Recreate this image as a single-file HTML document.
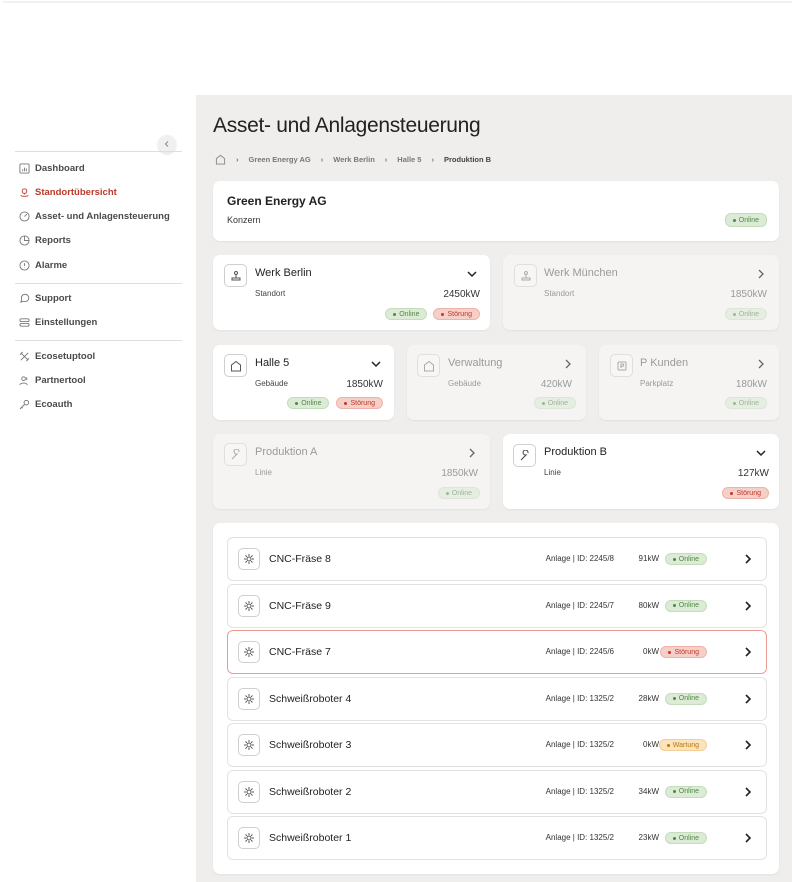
<!DOCTYPE html>
<html><head><meta charset="utf-8"><style>
*{box-sizing:border-box;margin:0;padding:0}
body{width:792px;height:882px;position:relative;background:#fff;font-family:"Liberation Sans",sans-serif;color:#222;overflow:hidden}
.a{position:absolute}
.topline{left:3px;top:1px;width:789px;height:2px;background:#f1f1f1}
.main{left:196px;top:95px;width:596px;height:787px;background:#efeeec}
.nav{left:19px;font-size:9.5px;font-weight:bold;color:#4a4a4a;display:flex;align-items:center;gap:5px}
.nav svg{width:11px;height:11px}
.div{left:15px;width:167px;height:1px;background:#dedede}
.card{background:#fff;border-radius:7px;box-shadow:0 1px 2px rgba(0,0,0,.06)}
.fade{background:#f5f4f3}
.ib{width:23px;height:23px;border:1px solid #cfcfcf;border-radius:5px;background:#fff;display:flex;align-items:center;justify-content:center}
.fade .ib{background:#f7f6f5;border-color:#e0dfdd}
.ib svg{width:12px;height:12px}
.t{font-size:11px;color:#222}
.fade .t,.fade .s,.fade .kw{color:#9a9a9a}
.s{font-size:8px;color:#444}
.kw{font-size:10px;color:#333}
.bd{font-size:7px;height:12px;border-radius:6px;padding:0 7px;display:inline-flex;align-items:center;gap:3px;white-space:nowrap}
.bd:before{content:"";width:3px;height:3px;border-radius:50%;background:currentColor}
.on{background:#dcebd6;color:#4f8a45;border:1px solid #c4dcbb}
.st{background:#f5cfc8;color:#c0392b;border:1px solid #eeb3a8}
.wa{background:#fbe3bd;color:#b9770e;border:1px solid #f3cf93}
.fade .on{background:#e6ede2;color:#9fb598;border-color:#dbe6d5}
.chev{width:12px;height:12px}
.row{left:227px;width:540px;height:44px;border:1px solid #e3e2e0;border-radius:6px;background:#fff}
.row .ib{position:absolute;left:10px;top:10px;width:22px;height:22px}
.row .nm{position:absolute;left:41px;top:15px;font-size:10.5px;color:#222}
.row .mt{position:absolute;right:152px;top:16px;font-size:8px;color:#333}
.row .k{position:absolute;right:107px;top:16px;font-size:8px;color:#333}
.row .bd{position:absolute;right:59px;top:15px}
.row .cv{position:absolute;right:12px;top:15px}
</style></head><body>
<div class="a topline"></div>

<div class="a" style="left:158px;top:135px;width:18px;height:18px;border-radius:50%;background:#f0f0f0;box-shadow:0 1px 2px rgba(0,0,0,.15);display:flex;align-items:center;justify-content:center"><svg width="8" height="8" viewBox="0 0 8 8" fill="none" stroke="#888"><path d="M5 1.5L2.5 4 5 6.5"/></svg></div>
<div class="a div" style="top:151px"></div>
<div class="a nav" style="top:163px"><svg viewBox="0 0 12 12" fill="none" stroke="#777"><rect x="1" y="1" width="10" height="10" rx="1"/><path d="M4 9V7M6 9V5M8 9V6"/></svg>Dashboard</div>
<div class="a nav" style="top:187px;color:#b83a2c"><svg viewBox="0 0 12 12" fill="none" stroke="#b83a2c"><circle cx="6" cy="4.5" r="2.5"/><path d="M6 7v1M2 9c0 1.5 8 1.5 8 0"/></svg>Standortübersicht</div>
<div class="a nav" style="top:211px"><svg viewBox="0 0 12 12" fill="none" stroke="#777"><circle cx="6" cy="6" r="5"/><path d="M6 6l2.5-2.5"/></svg>Asset- und Anlagensteuerung</div>
<div class="a nav" style="top:235px"><svg viewBox="0 0 12 12" fill="none" stroke="#777"><circle cx="6" cy="6" r="5"/><path d="M6 1v5h5"/></svg>Reports</div>
<div class="a nav" style="top:260px"><svg viewBox="0 0 12 12" fill="none" stroke="#777"><circle cx="6" cy="6" r="5"/><path d="M6 3.5v3M6 8v.5"/></svg>Alarme</div>
<div class="a div" style="top:283px"></div>
<div class="a nav" style="top:293px"><svg viewBox="0 0 12 12" fill="none" stroke="#777"><path d="M2 10l1-3a4 4 0 1 1 2 2z"/></svg>Support</div>
<div class="a nav" style="top:317px"><svg viewBox="0 0 12 12" fill="none" stroke="#777"><rect x="1" y="2" width="10" height="3" rx="1.5"/><rect x="1" y="7" width="10" height="3" rx="1.5"/></svg>Einstellungen</div>
<div class="a div" style="top:340px"></div>
<div class="a nav" style="top:351px"><svg viewBox="0 0 12 12" fill="none" stroke="#777"><path d="M2 2l8 8M10 2L2 10M1 4l3-3M8 11l3-3"/></svg>Ecosetuptool</div>
<div class="a nav" style="top:375px"><svg viewBox="0 0 12 12" fill="none" stroke="#777"><circle cx="5" cy="4" r="2"/><path d="M1 11c0-3 8-3 8 0M8 2.5a2 2 0 0 1 0 3"/></svg>Partnertool</div>
<div class="a nav" style="top:399px"><svg viewBox="0 0 12 12" fill="none" stroke="#777"><circle cx="8" cy="4" r="2.5"/><path d="M6 6l-5 5M3 9l1 1"/></svg>Ecoauth</div>

<div class="a main"></div>
<div class="a" style="left:213px;top:114px;font-size:21px;color:#222;letter-spacing:-.3px">Asset- und Anlagensteuerung</div>
<div class="a" style="left:215px;top:154px;display:flex;align-items:center;gap:10px;font-size:7.5px;font-weight:bold;color:#777">
<svg width="11" height="11" viewBox="0 0 12 12" fill="none" stroke="#888"><path d="M1.5 11V5L6 1.5 10.5 5v6z"/></svg>
<span>›</span><span>Green Energy AG</span><span>›</span><span>Werk Berlin</span><span>›</span><span>Halle 5</span><span>›</span><span style="color:#444">Produktion B</span></div>

<div class="a card" style="left:213px;top:181px;width:566px;height:60px">
<div class="a" style="left:14px;top:13px;font-size:12px;font-weight:bold;color:#222">Green Energy AG</div>
<div class="a" style="left:14px;top:34px;font-size:9px;color:#333">Konzern</div>
<span class="a bd on" style="right:12px;top:32px;height:14px">Online</span>
</div>

<div class="a card" style="left:213px;top:255px;width:277px;height:75px">
<div class="a ib" style="left:11px;top:9px"><svg viewBox="0 0 12 12" fill="none" stroke="#555"><circle cx="6" cy="3" r="1.5"/><path d="M6 4.5v3M2 8h8v2H2z"/></svg></div>
<div class="a t" style="left:42px;top:12px">Werk Berlin</div><svg class="a chev" style="right:12px;top:13px" viewBox="0 0 12 12" fill="none" stroke="#222" stroke-width="1.5"><path d="M2 4l4 4 4-4"/></svg>
<div class="a s" style="left:42px;top:34px">Standort</div><div class="a kw" style="right:10px;top:34px">2450kW</div>
<div class="a" style="right:10px;top:53px;display:flex;gap:6px"><span class="bd on">Online</span><span class="bd st">Störung</span></div>
</div>
<div class="a card fade" style="left:503px;top:255px;width:276px;height:75px">
<div class="a ib" style="left:11px;top:9px"><svg viewBox="0 0 12 12" fill="none" stroke="#aaa"><circle cx="6" cy="3" r="1.5"/><path d="M6 4.5v3M2 8h8v2H2z"/></svg></div>
<div class="a t" style="left:41px;top:12px">Werk München</div><svg class="a chev" style="right:12px;top:13px" viewBox="0 0 12 12" fill="none" stroke="#666" stroke-width="1.3"><path d="M4 2l4 4-4 4"/></svg>
<div class="a s" style="left:41px;top:34px">Standort</div><div class="a kw" style="right:12px;top:34px">1850kW</div>
<span class="a bd on" style="right:12px;top:53px">Online</span>
</div>

<div class="a card" style="left:213px;top:345px;width:181px;height:75px">
<div class="a ib" style="left:11px;top:9px"><svg viewBox="0 0 12 12" fill="none" stroke="#555"><path d="M1.5 11V5L6 1.5 10.5 5v6z"/></svg></div>
<div class="a t" style="left:42px;top:12px">Halle 5</div><svg class="a chev" style="right:12px;top:13px" viewBox="0 0 12 12" fill="none" stroke="#222" stroke-width="1.5"><path d="M2 4l4 4 4-4"/></svg>
<div class="a s" style="left:42px;top:34px">Gebäude</div><div class="a kw" style="right:11px;top:34px">1850kW</div>
<div class="a" style="right:11px;top:52px;display:flex;gap:7px"><span class="bd on">Online</span><span class="bd st">Störung</span></div>
</div>
<div class="a card fade" style="left:407px;top:345px;width:179px;height:75px">
<div class="a ib" style="left:10px;top:9px"><svg viewBox="0 0 12 12" fill="none" stroke="#aaa"><path d="M1.5 11V5L6 1.5 10.5 5v6z"/></svg></div>
<div class="a t" style="left:41px;top:12px">Verwaltung</div><svg class="a chev" style="right:12px;top:13px" viewBox="0 0 12 12" fill="none" stroke="#666" stroke-width="1.3"><path d="M4 2l4 4-4 4"/></svg>
<div class="a s" style="left:41px;top:34px">Gebäude</div><div class="a kw" style="right:14px;top:34px">420kW</div>
<span class="a bd on" style="right:10px;top:52px">Online</span>
</div>
<div class="a card fade" style="left:599px;top:345px;width:180px;height:75px">
<div class="a ib" style="left:11px;top:9px"><svg viewBox="0 0 12 12" fill="none" stroke="#aaa"><rect x="2" y="2" width="8" height="8" rx="1"/><path d="M5 8V4h1.5a1.2 1.2 0 0 1 0 2.4H5"/></svg></div>
<div class="a t" style="left:41px;top:12px">P Kunden</div><svg class="a chev" style="right:12px;top:13px" viewBox="0 0 12 12" fill="none" stroke="#666" stroke-width="1.3"><path d="M4 2l4 4-4 4"/></svg>
<div class="a s" style="left:41px;top:34px">Parkplatz</div><div class="a kw" style="right:12px;top:34px">180kW</div>
<span class="a bd on" style="right:12px;top:52px">Online</span>
</div>

<div class="a card fade" style="left:213px;top:434px;width:277px;height:75px">
<div class="a ib" style="left:11px;top:9px"><svg viewBox="0 0 12 12" fill="none" stroke="#aaa"><path d="M2 10l5-5a2.5 2.5 0 1 1 2-2"/></svg></div>
<div class="a t" style="left:42px;top:12px">Produktion A</div><svg class="a chev" style="right:12px;top:13px" viewBox="0 0 12 12" fill="none" stroke="#666" stroke-width="1.3"><path d="M4 2l4 4-4 4"/></svg>
<div class="a s" style="left:42px;top:34px">Linie</div><div class="a kw" style="right:12px;top:34px">1850kW</div>
<span class="a bd on" style="right:10px;top:53px">Online</span>
</div>
<div class="a card" style="left:503px;top:434px;width:276px;height:75px">
<div class="a ib" style="left:10px;top:10px"><svg viewBox="0 0 12 12" fill="none" stroke="#444"><path d="M2 10l5-5a2.5 2.5 0 1 1 2-2"/></svg></div>
<div class="a t" style="left:41px;top:12px">Produktion B</div><svg class="a chev" style="right:12px;top:13px" viewBox="0 0 12 12" fill="none" stroke="#222" stroke-width="1.5"><path d="M2 4l4 4 4-4"/></svg>
<div class="a s" style="left:41px;top:34px">Linie</div><div class="a kw" style="right:10px;top:34px">127kW</div>
<span class="a bd st" style="right:10px;top:53px">Störung</span>
</div>

<div class="a card" style="left:213px;top:523px;width:566px;height:351px"></div>
<div id="list"></div>
<script>
var g='<svg viewBox="0 0 12 12" fill="none" stroke="#555"><circle cx="6" cy="6" r="2"/><path d="M6 1v2M6 9v2M1 6h2M9 6h2M2.5 2.5l1.4 1.4M8.1 8.1l1.4 1.4M2.5 9.5l1.4-1.4M8.1 3.9l1.4-1.4"/></svg>';
var cv='<svg class="cv chev" viewBox="0 0 12 12" fill="none" stroke="#222" stroke-width="1.6"><path d="M4 2l4 4-4 4"/></svg>';
var d=[["CNC-Fräse 8","2245/8","91kW","on","Online"],["CNC-Fräse 9","2245/7","80kW","on","Online"],["CNC-Fräse 7","2245/6","0kW","st","Störung"],["Schweißroboter 4","1325/2","28kW","on","Online"],["Schweißroboter 3","1325/2","0kW","wa","Wartung"],["Schweißroboter 2","1325/2","34kW","on","Online"],["Schweißroboter 1","1325/2","23kW","on","Online"]];
var h='';d.forEach(function(r,i){var y=537+i*46.5;var b=r[3]=='st'?'border-color:#ec9d91;':'';
h+='<div class="a row" style="top:'+y+'px;'+b+'"><div class="ib">'+g+'</div><div class="nm">'+r[0]+'</div><div class="mt">Anlage&nbsp;|&nbsp;ID: '+r[1]+'</div><div class="k">'+r[2]+'</div><span class="bd '+r[3]+'">'+r[4]+'</span>'+cv+'</div>';});
document.getElementById('list').innerHTML=h;
</script>
</body></html>
